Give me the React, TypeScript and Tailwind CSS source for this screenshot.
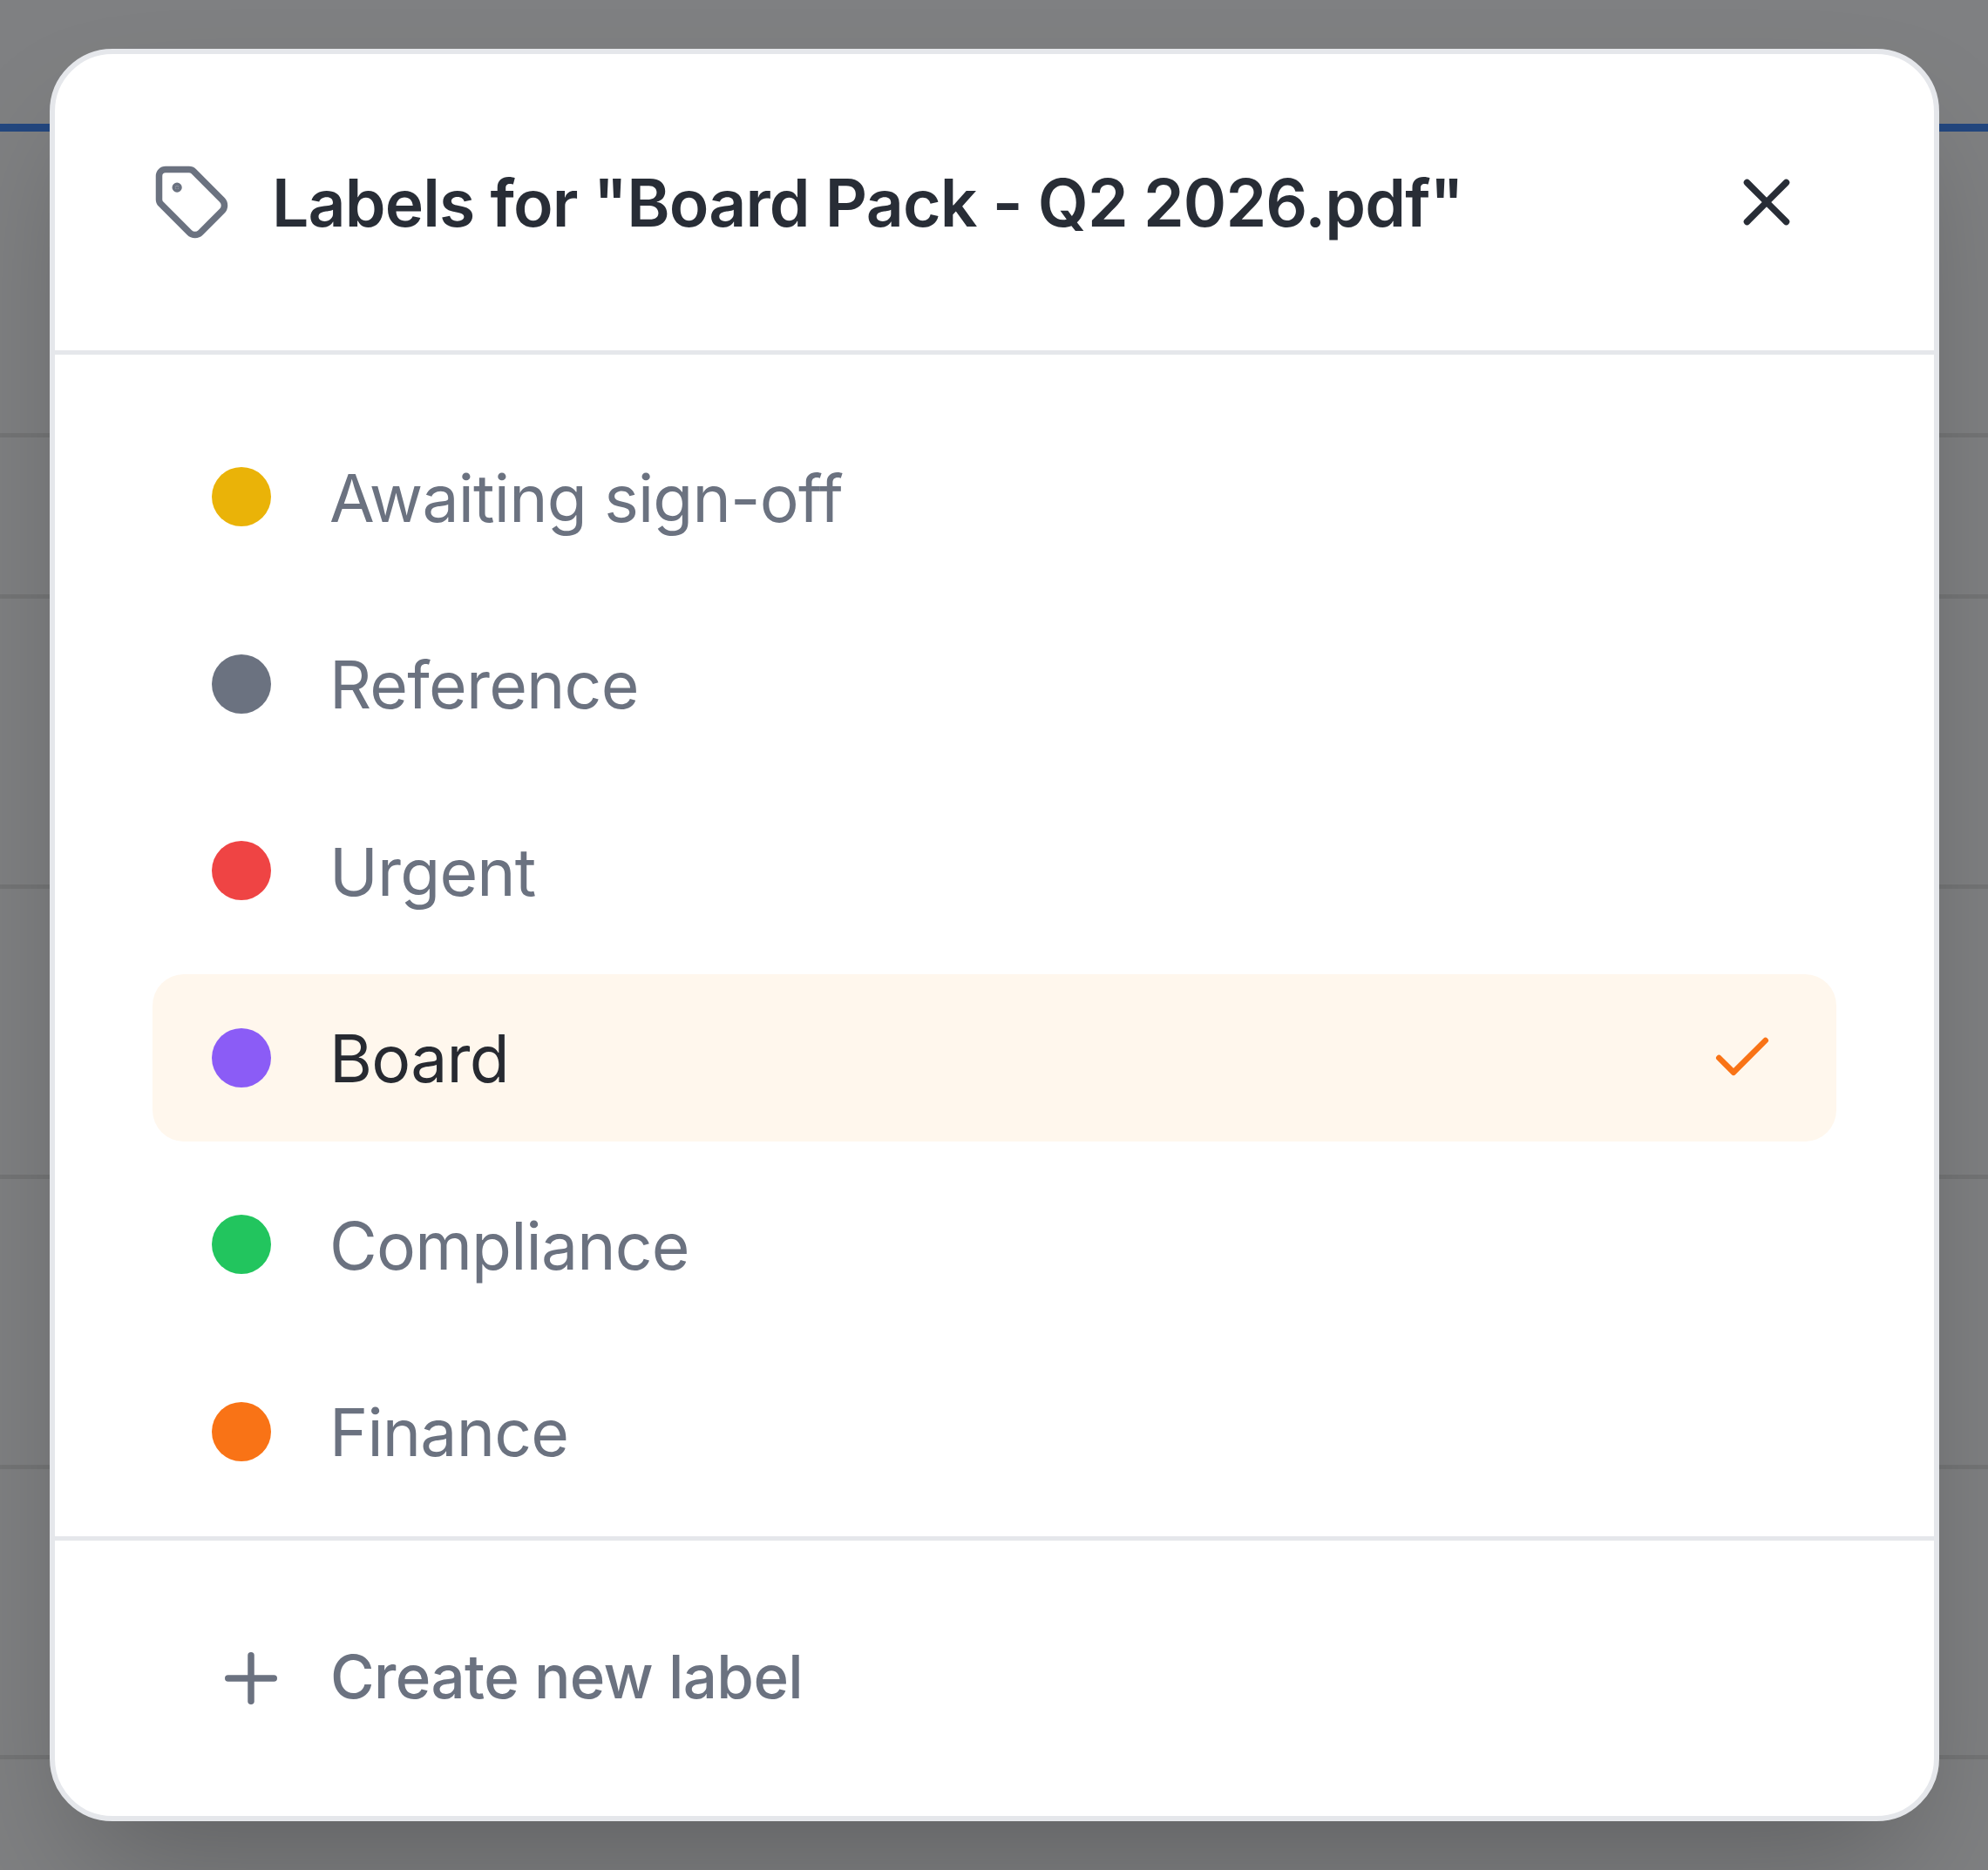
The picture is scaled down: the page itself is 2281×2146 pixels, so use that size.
import { Check, Plus, Tag, X } from "lucide-react";

const labels = [
  { name: "Awaiting sign-off", dot: "bg-[#eab308]" },
  { name: "Reference", dot: "bg-[#6b7280]" },
  { name: "Urgent", dot: "bg-[#ef4444]" },
  { name: "Board", dot: "bg-[#8b5cf6]", selected: true },
  { name: "Compliance", dot: "bg-[#22c55e]" },
  { name: "Finance", dot: "bg-[#f97316]" },
];

// Row heights of the page behind the dialog
const backgroundRows = ["h-[351px]", "h-[185px]", "h-[333px]", "h-[333px]", "h-[333px]", "h-[333px]"];

export default function App() {
  return (
    <div className="relative w-[2281px] h-[2146px] overflow-hidden bg-[#7f8082] font-[Inter,sans-serif]">
      {/* Page behind the dialog */}
      <div className="h-[151px] border-b-[9px] border-[#23477f]" />
      {backgroundRows.map((row, i) => (
        <div key={i} className={`${row} border-b-[5px] border-[#747576]`} />
      ))}

      {/* Dialog */}
      <div className="absolute inset-0 pl-[57px] pr-[56px] py-[56px]">
        <div className="flex flex-col h-full rounded-[72px] border-[6px] border-[#e5e7eb] bg-white shadow-[0_75px_150px_-36px_rgba(0,0,0,0.25)]">
          {/* Header */}
          <div className="flex items-center justify-between h-[345px] shrink-0 border-b-[5px] border-[#e5e7eb] pl-[112px] pr-[147px]">
            <div className="flex items-center gap-[47px]">
              <Tag size={90} strokeWidth={2} className="text-[#6b7280]" />
              <h2 className="text-[75px] font-semibold leading-none tracking-[-0.84px] text-[#282d36]">
                Labels for "Board Pack - Q2 2026.pdf"
              </h2>
            </div>
            <X size={90} strokeWidth={2} className="text-[#282d36]" />
          </div>

          {/* Label list */}
          <div className="flex flex-col gap-[22.6px] px-[112px] pt-[67px] pb-[24px] border-b-[5px] border-[#e5e7eb]">
            {labels.map((label) => (
              <div
                key={label.name}
                className={`flex items-center justify-between h-[192px] px-[68px] rounded-[36px] ${
                  label.selected ? "bg-[#fff7ed]" : ""
                }`}
              >
                <div className="flex items-center gap-[67px]">
                  <span className={`w-[68px] h-[68px] rounded-full ${label.dot}`} />
                  <span
                    className={`pt-[2px] text-[75px] leading-none tracking-[-0.8px] ${
                      label.selected ? "text-[#272a31]" : "text-[#6b7280]"
                    }`}
                  >
                    {label.name}
                  </span>
                </div>
                {label.selected && <Check size={80} strokeWidth={2} className="text-[#f97316]" />}
              </div>
            ))}
          </div>

          {/* Footer */}
          <div className="flex flex-1 items-center gap-[46px] px-[180px]">
            <Plus size={90} strokeWidth={2} className="text-[#6b7280]" />
            <span className="pb-[2px] text-[69px] font-medium leading-none tracking-[-0.6px] text-[#6b7280]">
              Create new label
            </span>
          </div>
        </div>
      </div>
    </div>
  );
}
